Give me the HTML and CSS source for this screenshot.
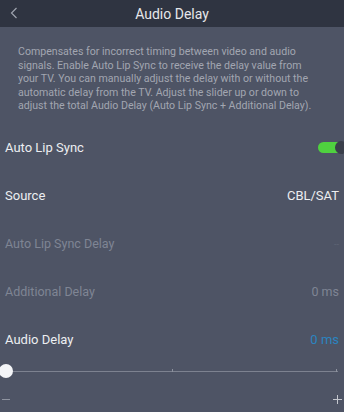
FILE: index.html
```html
<!DOCTYPE html>
<html>
<head>
<meta charset="utf-8">
<link rel="stylesheet" href="styles.css">
</head>
<body>
<div class="screen">
  <header class="topbar">
    <span class="back">
      <svg width="8" height="12" viewBox="0 0 8 12"><path d="M6.5 1 L1.5 6 L6.5 11" fill="none" stroke="#9ea3ae" stroke-width="1.2"/></svg>
    </span>
    <h1 class="title">Audio Delay</h1>
  </header>
  <p class="desc">Compensates for incorrect timing between video and audio signals. Enable Auto Lip Sync to receive the delay value from your TV. You can manually adjust the delay with or without the automatic delay from the TV. Adjust the slider up or down to adjust the total Audio Delay (Auto Lip Sync + Additional Delay).</p>
  <div class="rows">
    <div class="row">
      <span class="label">Auto Lip Sync</span>
      <span class="toggle"><span class="knob"></span></span>
    </div>
    <div class="row">
      <span class="label">Source</span>
      <span class="value">CBL/SAT</span>
    </div>
    <div class="row dim">
      <span class="label">Auto Lip Sync Delay</span>
      <span class="value faint">--</span>
    </div>
    <div class="row dim">
      <span class="label">Additional Delay</span>
      <span class="value">0 ms</span>
    </div>
    <div class="row">
      <span class="label">Audio Delay</span>
      <span class="value blue">0 ms</span>
    </div>
  </div>
  <div class="slider">
    <span class="track"></span>
    <span class="tick mid"></span>
    <span class="tick end"></span>
    <span class="thumb"></span>
  </div>
  <div class="steps">
    <span class="minus"></span>
    <span class="plus"></span>
  </div>
</div>
</body>
</html>
```
FILE: styles.css
```css
html, body { margin: 0; padding: 0; }
body { background: #4e5465; font-family: Roboto, "Noto Sans", sans-serif; overflow: hidden; }
.screen { width: 344px; height: 412px; display: flex; flex-direction: column; }
.topbar { height: 27px; background: #2f3441; display: flex; align-items: center; justify-content: center; position: relative; flex-shrink: 0; }
.back { position: absolute; left: 10px; top: 7px; display: flex; }
.title { margin: 0; font-size: 14px; font-weight: 400; color: #e6e7ea; }
.desc { margin: 18px 0 0 18px; width: 294px; font-size: 10.6px; line-height: 13.5px; color: #a2a6b1; }
.rows { margin-top: 11px; display: flex; flex-direction: column; }
.row { display: flex; justify-content: space-between; align-items: center; height: 48px; padding: 0 5px; }
.label { font-size: 13px; color: #eceef1; }
.value { font-size: 13px; color: #eceef1; }
.dim .label, .dim .value { color: #7f8594; font-size: 12.5px; }
.dim .faint { color: #5f6575; font-size: 9px; }
.blue { color: #2b84c0 !important; }
.toggle { width: 26px; height: 11px; background: #4fd13f; border-radius: 6px; position: relative; margin-right: -5px; }
.knob { position: absolute; right: -3px; top: -1px; width: 12px; height: 13px; border-radius: 50%; background: #3a3f4b; }
.slider { position: relative; height: 20px; margin-top: -3px; flex-shrink: 0; }
.track { position: absolute; left: 6px; right: 6px; top: 10px; height: 1px; background: #7d8290; }
.tick { position: absolute; top: 8px; width: 1px; height: 3px; background: #8d929e; }
.tick.mid { left: 172px; }
.tick.end { left: 336px; }
.thumb { position: absolute; left: -1px; top: 3px; width: 14px; height: 14px; border-radius: 50%; background: #f4f5f8; }
.steps { display: flex; justify-content: space-between; padding: 14px 2px 0 2px; }
.minus { width: 8px; height: 1px; background: #8f94a0; margin-top: 4px; }
.plus { width: 9px; height: 9px; position: relative; }
.plus::before { content: ""; position: absolute; left: 0; right: 0; top: 4px; height: 1px; background: #c4c7ce; }
.plus::after { content: ""; position: absolute; top: 0; bottom: 0; left: 4px; width: 1px; background: #c4c7ce; }
```
